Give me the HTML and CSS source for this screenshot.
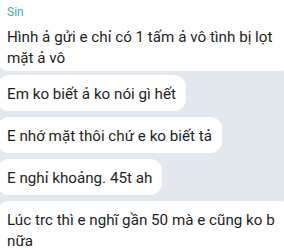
FILE: index.html
```html
<!DOCTYPE html>
<html lang="vi">
<head>
    <meta charset="UTF-8">
    <meta name="viewport" content="width=device-width, initial-scale=1.0">
    <title>Chat</title>
    <link rel="stylesheet" href="styles.css">
</head>
<body>
    <div class="chat">
        <div class="bubble first">
            <div class="name">Sin</div>
            <div class="text">Hình ả gửi e chỉ có 1 tấm ả vô tình bị lọt mặt ả vô</div>
        </div>
        <div class="bubble">
            <div class="text">Em ko biết ả ko nói gì hết</div>
        </div>
        <div class="bubble">
            <div class="text">E nhớ mặt thôi chứ e ko biết tả</div>
        </div>
        <div class="bubble">
            <div class="text">E nghỉ khoảng. 45t ah</div>
        </div>
        <div class="bubble last">
            <div class="text">Lúc trc thì e nghĩ gần 50 mà e cũng ko b nữa</div>
            <div class="time">10:52</div>
        </div>
    </div>
</body>
</html>
```

FILE: styles.css
```css
body{
    margin:0;
    padding:0;
    background-color: #e3e8ee;
    font-family: Roboto, "Noto Sans", sans-serif;
    overflow: hidden;
}

.chat{
    display: flex;
    flex-direction: column;
    align-items: flex-start;
    gap: 6px;
    margin-top: -3px;
    margin-left: -3px;
    width: 300px;
}

.bubble{
    background-color: #ffffff;
    border-radius: 12px;
    padding: 9px 10px 6px 10px;
    max-width: 274px;
}

.bubble.first{
    padding-top: 8px;
    padding-bottom: 2px;
    margin-bottom: -2px;
}

.name{
    font-size: 12px;
    line-height: 14px;
    color: #3fae9f;
    margin-bottom: 8px;
}

.text{
    font-size: 15.2px;
    line-height: 21px;
    color: #1e1e1e;
}

.time{
    font-size: 10px;
    line-height: 14px;
    color: #9aa0a6;
    margin-top: 2px;
}
```
